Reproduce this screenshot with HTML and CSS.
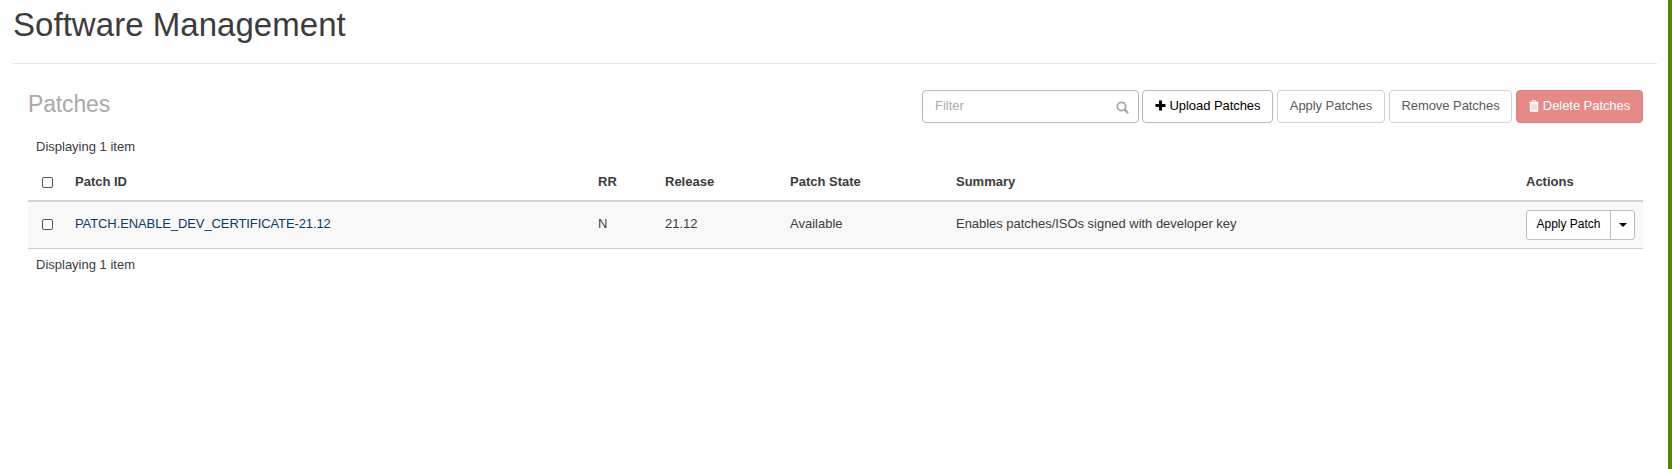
FILE: index.html
```html
<!DOCTYPE html>
<html lang="en">
<head>
<meta charset="utf-8">
<title>Software Management</title>
<link rel="stylesheet" href="styles.css">
</head>
<body>
<main class="page">
  <h1 class="page-title">Software Management</h1>
  <section class="panel">
    <div class="toolbar">
      <h2 class="panel-title">Patches</h2>
      <div class="actions">
        <div class="filter">
          <span class="filter-text">Filter</span>
          <svg class="search" width="13" height="13" viewBox="0 0 13 13"><circle cx="5.5" cy="5.5" r="4.2" fill="none" stroke="#a5a5a5" stroke-width="1.8"/><path d="M8.6 8.6l2.9 2.9" stroke="#a5a5a5" stroke-width="2.1" stroke-linecap="round"/></svg>
        </div>
        <button class="btn upload"><svg class="plus" width="11" height="11" viewBox="0 0 11 11"><path d="M4 .5h3V4h3.5v3H7v3.5H4V7H.5V4H4z"/></svg><span>Upload Patches</span></button>
        <button class="btn apply faded"><span>Apply Patches</span></button>
        <button class="btn remove faded"><span>Remove Patches</span></button>
        <button class="btn delete"><svg class="trash" width="10" height="12" viewBox="0 0 10 12"><path fill="#fff" fill-rule="evenodd" d="M2.8 1.7L3.4.2h3.2l.6 1.5h2.5v1.4h-.5v7.8q0 .9-.9.9H1.7q-.9 0-.9-.9V3.1H.3V1.7zM4 1.7h2L5.8 1.1H4.2zM2.7 4.2v5.8h.6V4.2zm2 0v5.8h.6V4.2zm2 0v5.8h.6V4.2z"/></svg><span>Delete Patches</span></button>
      </div>
    </div>
    <div class="count">Displaying 1 item</div>
    <div class="row head">
      <span class="box"></span><span>Patch ID</span><span>RR</span><span>Release</span><span>Patch State</span><span>Summary</span><span>Actions</span>
    </div>
    <div class="row item">
      <span class="box"></span><a class="link">PATCH.ENABLE_DEV_CERTIFICATE-21.12</a><span>N</span><span>21.12</span><span>Available</span><span class="summary">Enables patches/ISOs signed with developer key</span>
      <div class="split"><button class="split-main">Apply Patch</button><button class="split-toggle"><svg width="8" height="4" viewBox="0 0 8 4"><path d="M0 0h8L4 4z"/></svg></button></div>
    </div>
    <div class="count foot">Displaying 1 item</div>
  </section>
</main>
</body>
</html>
```
FILE: styles.css
```css
* { box-sizing: border-box; }
body {
  margin: 0;
  background: #fefefe;
  color: #3c3c3c;
  font: 13px/20px "Liberation Sans", Arial, sans-serif;
}
.page {
  height: 469px;
  padding: 0 11px 0 13px;
  border-right: 4px solid #4b8b02;
  overflow: hidden;
}
.page-title {
  height: 64px;
  margin: 0;
  padding-top: 5px;
  border-bottom: 1px solid #e5e5e5;
  font-size: 33px;
  font-weight: 400;
  line-height: 40px;
  letter-spacing: 0.04px;
}
.panel { padding: 26px 14px 0 15px; }
.toolbar { display: flex; justify-content: space-between; height: 33px; }
.panel-title {
  margin: 0;
  color: #aaa;
  font-size: 23px;
  font-weight: 400;
  line-height: 28px;
  letter-spacing: -0.15px;
}
.actions { display: flex; }
.filter {
  display: flex;
  justify-content: space-between;
  width: 217px;
  height: 33px;
  margin-right: 3px;
  padding: 5px 9px 0 12px;
  border: 1px solid #b8b8b8;
  border-radius: 4px;
  background: #fff;
  color: #aaa;
}
.filter-text { line-height: 20px; }
.search { margin-top: 5px; }
.btn {
  display: flex;
  align-items: center;
  justify-content: center;
  gap: 4px;
  height: 33px;
  margin: 0 4px 0 0;
  padding: 0 0 2px;
  border: 1px solid #b8b8b8;
  border-radius: 4px;
  background: #fff;
  color: #000;
  font: inherit;
  letter-spacing: -0.06px;
  white-space: nowrap;
}
.upload { width: 131px; }
.apply { width: 108px; }
.remove { width: 123px; }
.faded { border-color: #d2d2d2; color: #595959; }
.delete {
  width: 127px;
  margin-right: 0;
  border-color: #dd7f7d;
  background: #e68a88;
  color: #fff;
}
.count { height: 45px; padding: 14px 8px 0; }
.row {
  display: grid;
  grid-template-columns: 47px 523px 67px 125px 166px 570px 1fr;
}
.head {
  height: 34px;
  padding-top: 4px;
  border-bottom: 2px solid #d4d4d4;
  font-weight: 700;
}
.item {
  height: 47px;
  padding-top: 12px;
  border-bottom: 1px solid #d0d0d0;
  background: #f8f8f8;
}
.box {
  width: 11px;
  height: 11px;
  margin: 5px 0 0 14px;
  border: 1px solid #555;
  border-radius: 2px;
  background: #fff;
}
.link { color: #0a3a68; letter-spacing: -0.1px; }
.summary { letter-spacing: -0.03px; }
.split {
  display: flex;
  width: 109px;
  height: 30px;
  margin-top: -4px;
  border: 1px solid #bdbdbd;
  border-radius: 3px;
  background: #fff;
}
.split button {
  margin: 0;
  padding: 0;
  border: 0;
  background: none;
  color: #000;
  font: inherit;
  white-space: nowrap;
}
.split .split-main { width: 83px; padding-bottom: 2px; font-size: 12px; }
.split .split-toggle {
  display: flex;
  flex: 1;
  align-items: center;
  justify-content: center;
  padding-bottom: 1px;
  border-left: 1px solid #bdbdbd;
}
.foot { padding-top: 6px; }
```
